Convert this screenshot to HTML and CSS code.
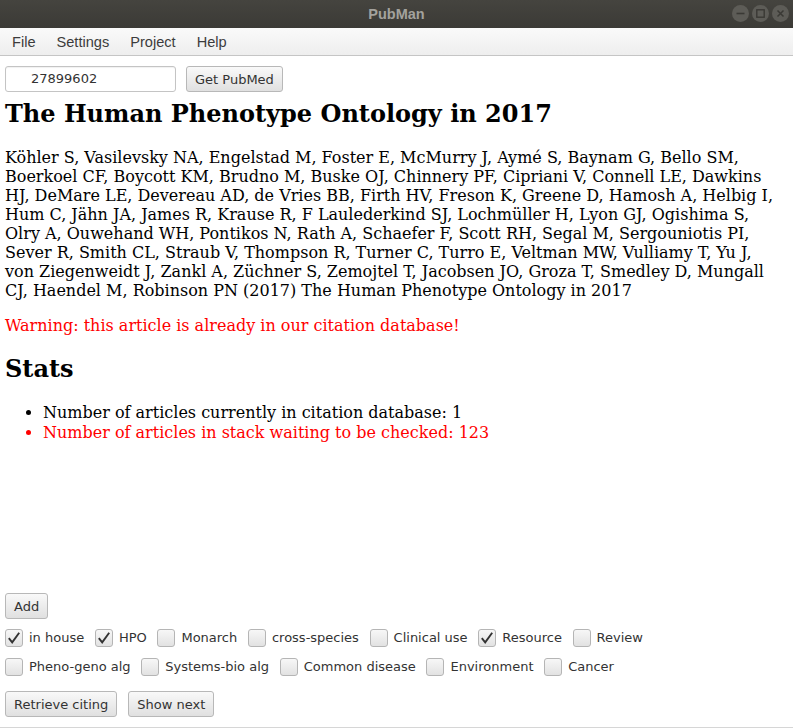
FILE: index.html
```html
<!DOCTYPE html>
<html>
<head>
<meta charset="utf-8">
<link rel="stylesheet" href="styles.css">
</head>
<body>
<div class="window">
  <div class="titlebar">
    <span class="title">PubMan</span>
    <div class="winbtns">
      <span class="wb"><svg width="17" height="17" viewBox="0 0 17 17"><line x1="4.5" y1="8.5" x2="12.5" y2="8.5" stroke="#3a3935" stroke-width="1.6"/></svg></span>
      <span class="wb"><svg width="17" height="17" viewBox="0 0 17 17"><rect x="4.8" y="4.8" width="7.4" height="7.4" fill="none" stroke="#3a3935" stroke-width="1.4"/></svg></span>
      <span class="wb"><svg width="17" height="17" viewBox="0 0 17 17"><path d="M5.5 5.5 L11.5 11.5 M11.5 5.5 L5.5 11.5" stroke="#3a3935" stroke-width="1.5"/></svg></span>
    </div>
  </div>
  <div class="menubar">
    <span class="menu">File</span>
    <span class="menu">Settings</span>
    <span class="menu">Project</span>
    <span class="menu">Help</span>
  </div>
  <div class="toolbar">
    <div class="textfield">27899602</div>
    <button class="btn">Get PubMed</button>
  </div>
  <div class="content">
    <h2 class="heading">The Human Phenotype Ontology in 2017</h2>
    <p class="authors">Köhler S, Vasilevsky NA, Engelstad M, Foster E, McMurry J, Aymé S, Baynam G, Bello SM, Boerkoel CF, Boycott KM, Brudno M, Buske OJ, Chinnery PF, Cipriani V, Connell LE, Dawkins HJ, DeMare LE, Devereau AD, de Vries BB, Firth HV, Freson K, Greene D, Hamosh A, Helbig I, Hum C, Jähn JA, James R, Krause R, F Laulederkind SJ, Lochmüller H, Lyon GJ, Ogishima S, Olry A, Ouwehand WH, Pontikos N, Rath A, Schaefer F, Scott RH, Segal M, Sergouniotis PI, Sever R, Smith CL, Straub V, Thompson R, Turner C, Turro E, Veltman MW, Vulliamy T, Yu J, von Ziegenweidt J, Zankl A, Züchner S, Zemojtel T, Jacobsen JO, Groza T, Smedley D, Mungall CJ, Haendel M, Robinson PN (2017) The Human Phenotype Ontology in 2017</p>
    <p class="warning">Warning: this article is already in our citation database!</p>
    <h2 class="heading stats">Stats</h2>
    <ul class="statlist">
      <li>Number of articles currently in citation database: 1</li>
      <li class="red">Number of articles in stack waiting to be checked: 123</li>
    </ul>
  </div>
  <div class="bottom">
    <div class="row"><button class="btn">Add</button></div>
    <div class="checks first">
      <label class="cb"><span class="box"><svg width="18" height="18" viewBox="0 0 18 18"><path d="M3.8 9.2 L7.2 13.4 L14.2 3.8" fill="none" stroke="#333" stroke-width="1.9"/></svg></span>in house</label>
      <label class="cb"><span class="box"><svg width="18" height="18" viewBox="0 0 18 18"><path d="M3.8 9.2 L7.2 13.4 L14.2 3.8" fill="none" stroke="#333" stroke-width="1.9"/></svg></span>HPO</label>
      <label class="cb"><span class="box"></span>Monarch</label>
      <label class="cb"><span class="box"></span>cross-species</label>
      <label class="cb"><span class="box"></span>Clinical use</label>
      <label class="cb"><span class="box"><svg width="18" height="18" viewBox="0 0 18 18"><path d="M3.8 9.2 L7.2 13.4 L14.2 3.8" fill="none" stroke="#333" stroke-width="1.9"/></svg></span>Resource</label>
      <label class="cb"><span class="box"></span>Review</label>
    </div>
    <div class="checks second">
      <label class="cb"><span class="box"></span>Pheno-geno alg</label>
      <label class="cb"><span class="box"></span>Systems-bio alg</label>
      <label class="cb"><span class="box"></span>Common disease</label>
      <label class="cb"><span class="box"></span>Environment</label>
      <label class="cb"><span class="box"></span>Cancer</label>
    </div>
    <div class="row actions">
      <button class="btn">Retrieve citing</button>
      <button class="btn">Show next</button>
    </div>
  </div>
</div>
</body>
</html>
```
FILE: styles.css
```css
html, body {
  margin: 0;
  padding: 0;
  background: #ffffff;
}
.window {
  width: 793px;
  height: 728px;
  display: flex;
  flex-direction: column;
  overflow: hidden;
  background: #ffffff;
  box-sizing: border-box;
  border-bottom: 1px solid #d6d6d6;
}
.titlebar {
  height: 28px;
  flex: none;
  background: linear-gradient(#45443f, #3b3a36);
  position: relative;
  display: flex;
  align-items: center;
  justify-content: center;
}
.title {
  font-family: "Liberation Sans", sans-serif;
  font-weight: bold;
  font-size: 14.5px;
  color: #a3a29d;
}
.winbtns {
  position: absolute;
  right: 4px;
  top: 5px;
  display: flex;
  gap: 3px;
}
.wb {
  width: 17px;
  height: 17px;
  border-radius: 50%;
  background: #5d5c57;
  display: block;
}
.wb svg { display: block; }
.menubar {
  height: 27px;
  flex: none;
  background: linear-gradient(#fafafa, #eeeeee);
  border-bottom: 1px solid #c5c5c5;
  display: flex;
  align-items: center;
  padding-left: 12px;
  gap: 21px;
  font-family: "Liberation Sans", sans-serif;
  font-size: 14.6px;
  color: #3c3c3c;
}
.toolbar {
  flex: none;
  display: flex;
  gap: 10px;
  padding: 10px 5px 0 5px;
}
.textfield {
  width: 171px;
  height: 26px;
  box-sizing: border-box;
  border: 1px solid #c4c4c4;
  border-radius: 3px;
  background: #fff;
  box-shadow: inset 0 1px 1px rgba(0,0,0,0.06);
  font-family: "DejaVu Sans", sans-serif;
  font-size: 13px;
  color: #333;
  line-height: 24px;
  padding-left: 25px;
}
.btn {
  height: 26px;
  box-sizing: border-box;
  border: 1px solid #b8b8b8;
  border-radius: 3px;
  background: linear-gradient(#f9f9f9, #e0e0e0);
  font-family: "DejaVu Sans", sans-serif;
  font-size: 13px;
  color: #333;
  padding: 0 8px;
  margin: 0;
}
.content {
  flex: 1;
  padding: 0 9px 0 5px;
  font-family: "DejaVu Serif", serif;
  font-size: 16px;
  color: #000;
}
.heading {
  font-size: 24px;
  font-weight: bold;
  margin: 8px 0 20px 0;
  line-height: 28px;
}
.authors {
  margin: 0 0 16px 0;
  line-height: 19px;
}
.warning {
  margin: 0;
  color: #ff0000;
  line-height: 19px;
}
.stats {
  margin-top: 20px;
}
.statlist {
  margin: 0;
  padding-left: 38px;
  line-height: 20px;
}
.statlist .red {
  color: #ff0000;
}
.bottom {
  flex: none;
  padding: 0 5px 10px 5px;
  display: flex;
  flex-direction: column;
}
.row {
  display: flex;
  gap: 11px;
}
.checks {
  display: flex;
  gap: 10.7px;
  font-family: "DejaVu Sans", sans-serif;
  font-size: 13px;
  color: #333;
}
.checks.first { margin-top: 9px; }
.checks.second { margin-top: 10px; }
.actions { margin-top: 15px; }
.cb {
  display: flex;
  align-items: center;
  gap: 6px;
  height: 19px;
}
.box {
  width: 18px;
  height: 18px;
  box-sizing: border-box;
  border: 1px solid #b5b5b5;
  border-radius: 3px;
  background: linear-gradient(#f7f7f7, #e2e2e2);
  display: block;
  position: relative;
}
.box svg {
  position: absolute;
  left: -1px;
  top: -1px;
}
```
